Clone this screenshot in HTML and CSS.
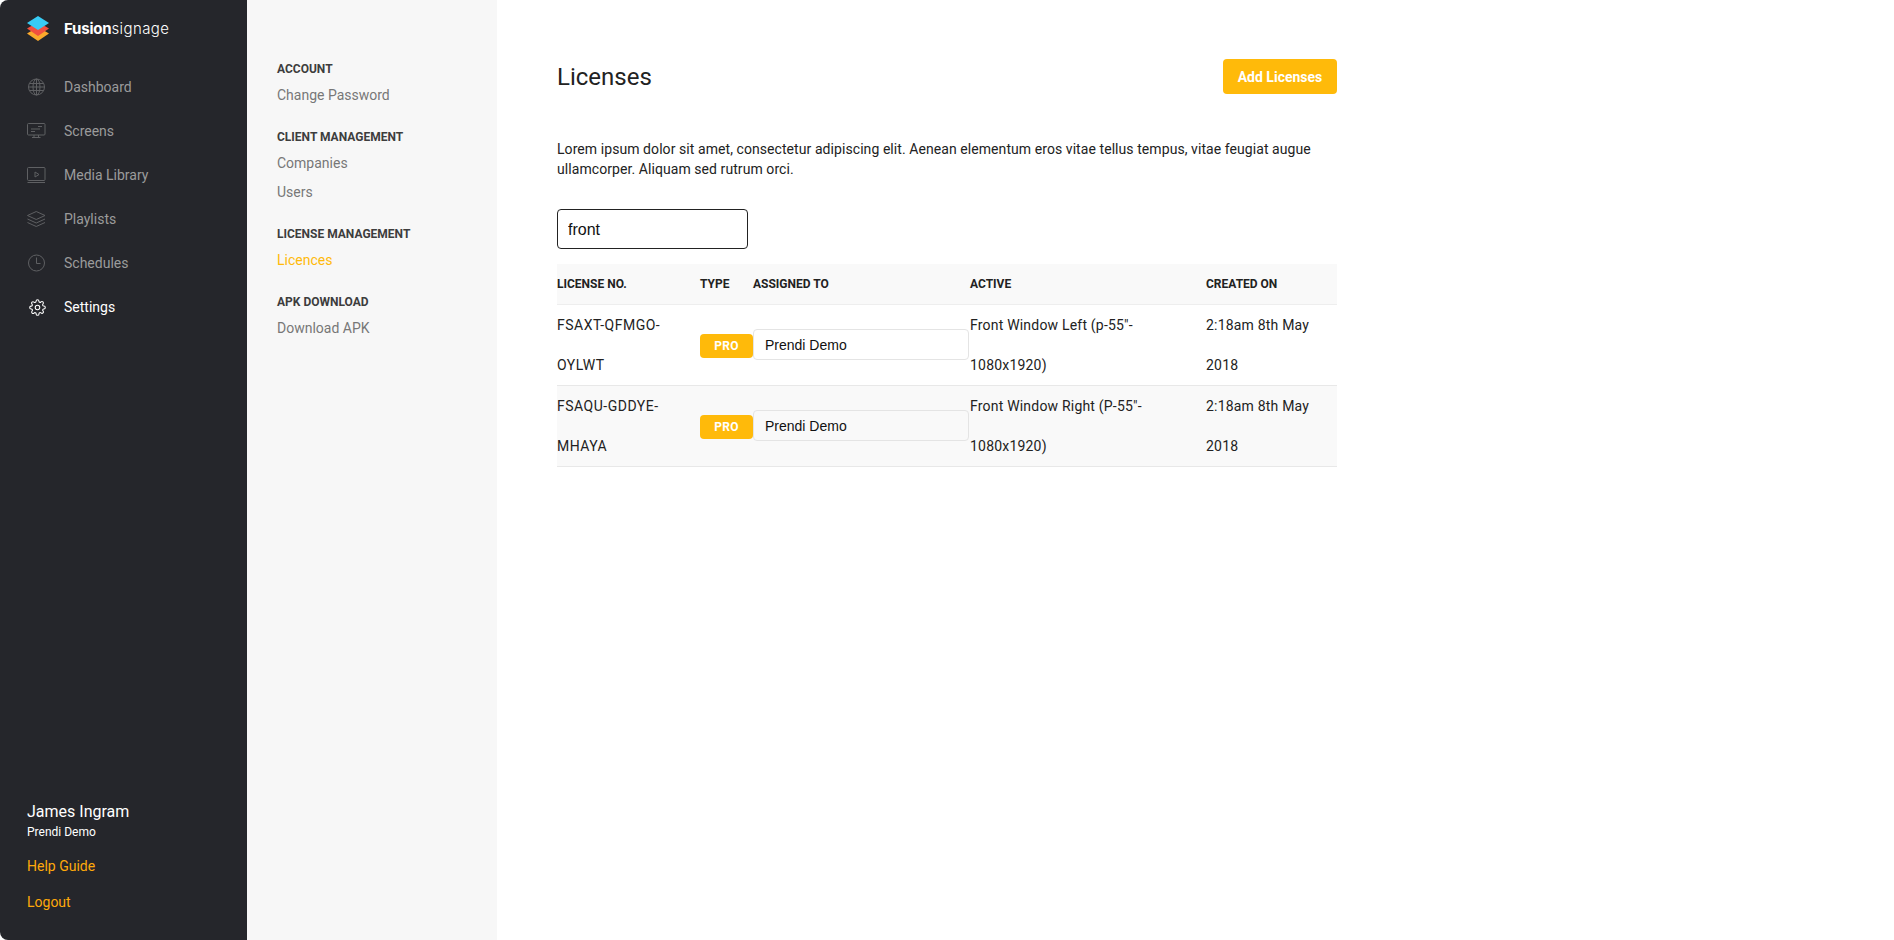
FILE: index.html
```html
<!DOCTYPE html>
<html lang="en">
<head>
    <meta charset="UTF-8">
    <title>Licenses</title>
    <link rel="stylesheet" href="styles.css">
</head>
<body>
    <div class="app">
        <aside class="sidebar">
            <div>
                <div class="logo">
                    <svg width="22" height="25" viewBox="1 0 22 25">
                        <path d="M12 11 L23 17.500 L12 25 L1 17.500 Z" fill="#fba92c"/>
                        <path d="M12 6 L23 12.500 L12 20 L1 12.500 Z" fill="#f1503f"/>
                        <path d="M12 0 L23 7 L12 14 L1 7 Z" fill="#38ccf5"/>
                    </svg>
                    <span class="logo-text"><b>Fusion</b>signage</span>
                </div>
                <nav class="main-nav">
                    <a href="#">
                        <svg viewBox="0 0 20 20" width="20" height="20"><circle cx="9.500" cy="10" r="8"/><ellipse cx="9.500" cy="10" rx="3.500" ry="8"/><path d="M9.500 2V18M1.500 10H17.500M2.500 6.500H16.500M2.500 13.500H16.500"/></svg>
                        Dashboard
                    </a>
                    <a href="#">
                        <svg viewBox="0 0 20 20" width="20" height="20"><rect x="0.500" y="2.500" width="17.500" height="11.500" rx="1"/><path d="M11 5.500H15M4 8H13M4 10.500H8M7 14V16.500M11.500 14V16.500M5 16.500H13.500"/></svg>
                        Screens
                    </a>
                    <a href="#">
                        <svg viewBox="0 0 20 20" width="20" height="20"><rect x="0.500" y="2.500" width="17.500" height="13" rx="1"/><path d="M0.500 17.500H18M8 7L12 9.500L8 12Z"/></svg>
                        Media Library
                    </a>
                    <a href="#">
                        <svg viewBox="0 0 20 20" width="20" height="20"><path d="M9.250 2.500L18 6.500L9.250 10.500L0.500 6.500Z"/><path d="M0.500 10L9.250 14L18 10M0.500 13.500L9.250 17.500L18 13.500"/></svg>
                        Playlists
                    </a>
                    <a href="#">
                        <svg viewBox="0 0 20 20" width="20" height="20"><circle cx="9.500" cy="10" r="8"/><path d="M9.500 4.500V10.500H13.500"/></svg>
                        Schedules
                    </a>
                    <a href="#" class="active">
                        <svg class="gear" viewBox="0 0 24 24" width="17" height="17"><circle cx="12" cy="12" r="3.200"/><path d="M19.400 15a1.650 1.650 0 0 0 .33 1.820l.06.06a2 2 0 1 1-2.830 2.830l-.06-.06a1.650 1.650 0 0 0-1.820-.33 1.650 1.650 0 0 0-1 1.510V21a2 2 0 1 1-4 0v-.09a1.650 1.650 0 0 0-1-1.510 1.650 1.650 0 0 0-1.820.33l-.06.06a2 2 0 1 1-2.830-2.830l.06-.06a1.650 1.650 0 0 0 .33-1.820 1.650 1.650 0 0 0-1.510-1H3a2 2 0 1 1 0-4h.09a1.650 1.650 0 0 0 1.510-1 1.650 1.650 0 0 0-.33-1.820l-.06-.06a2 2 0 1 1 2.830-2.830l.06.06a1.650 1.650 0 0 0 1.820.33h.08a1.650 1.650 0 0 0 1-1.510V3a2 2 0 1 1 4 0v.09a1.650 1.650 0 0 0 1 1.510 1.650 1.650 0 0 0 1.820-.33l.06-.06a2 2 0 1 1 2.830 2.830l-.06.06a1.650 1.650 0 0 0-.33 1.820v.08a1.650 1.650 0 0 0 1.510 1H21a2 2 0 1 1 0 4h-.09a1.650 1.650 0 0 0-1.510 1z"/></svg>
                        Settings
                    </a>
                </nav>
            </div>
            <div class="user">
                <div class="user-name">James Ingram</div>
                <div class="user-company">Prendi Demo</div>
                <a href="#" class="user-link">Help Guide</a>
                <a href="#" class="user-link">Logout</a>
            </div>
        </aside>

        <div class="subnav">
            <h4>ACCOUNT</h4>
            <a href="#">Change Password</a>
            <h4>CLIENT MANAGEMENT</h4>
            <a href="#">Companies</a>
            <a href="#">Users</a>
            <h4>LICENSE MANAGEMENT</h4>
            <a href="#" class="current">Licences</a>
            <h4>APK DOWNLOAD</h4>
            <a href="#">Download APK</a>
        </div>

        <main class="content">
            <div class="page-head">
                <h1>Licenses</h1>
                <button class="btn" type="button">Add Licenses</button>
            </div>
            <p class="intro">Lorem ipsum dolor sit amet, consectetur adipiscing elit. Aenean elementum eros vitae tellus tempus, vitae feugiat augue ullamcorper. Aliquam sed rutrum orci.</p>
            <input class="search" type="text" value="front">
            <table class="licenses">
                <colgroup>
                    <col class="col-no">
                    <col class="col-type">
                    <col class="col-assigned">
                    <col class="col-active">
                    <col class="col-created">
                </colgroup>
                <thead>
                    <tr>
                        <th>LICENSE NO.</th>
                        <th>TYPE</th>
                        <th>ASSIGNED TO</th>
                        <th>ACTIVE</th>
                        <th>CREATED ON</th>
                    </tr>
                </thead>
                <tbody>
                    <tr>
                        <td class="license-no">FSAXT-QFMGO-OYLWT</td>
                        <td class="flush"><span class="badge">PRO</span></td>
                        <td class="flush"><input class="assign" type="text" value="Prendi Demo"></td>
                        <td>Front Window Left (p-55"- 1080x1920)</td>
                        <td>2:18am 8th May 2018</td>
                    </tr>
                    <tr class="alt">
                        <td class="license-no">FSAQU-GDDYE-MHAYA</td>
                        <td class="flush"><span class="badge">PRO</span></td>
                        <td class="flush"><input class="assign" type="text" value="Prendi Demo"></td>
                        <td>Front Window Right (P-55"- 1080x1920)</td>
                        <td>2:18am 8th May 2018</td>
                    </tr>
                </tbody>
            </table>
        </main>
    </div>
</body>
</html>
```

FILE: styles.css
```css
* { box-sizing: border-box; }
html, body { margin: 0; height: 100%; }
body { font-family: Roboto, "Liberation Sans", sans-serif; font-size: 14px; color: #222; background: #fff; overflow: hidden; }
a { text-decoration: none; }

.app { display: flex; height: 940px; }

.sidebar { width: 247px; flex: none; background: #25262b; border-radius: 8px 0 0 8px; display: flex; flex-direction: column; justify-content: space-between; padding: 16px 0 28px 27px; }
.logo { display: flex; align-items: center; gap: 15px; height: 25px; margin-bottom: 24px; }
.logo-text { font-family: Inter, sans-serif; font-size: 15px; font-weight: 300; color: #fff; letter-spacing: 0.4px; }
.logo-text b { font-weight: 700; letter-spacing: -0.2px; }

.main-nav a { display: flex; align-items: center; gap: 17px; height: 44px; color: #9b9b9b; }
.main-nav svg { fill: none; stroke: #5f6063; stroke-width: 1; flex: none; }
.main-nav a.active { color: #fff; }
.main-nav a.active svg { stroke: #fff; stroke-width: 1.500; }
.main-nav .gear { margin: 0 1.500px; }

.user-name { font-size: 16px; line-height: 20px; color: #fff; }
.user-company { font-size: 12px; line-height: 18px; margin-top: 1px; color: #fff; }
.user-link { display: block; color: #ffa90a; line-height: 20px; margin-top: 16px; }
.user-company + .user-link { margin-top: 15px; }

.subnav { width: 250px; flex: none; background: #f7f7f7; padding: 61px 0 0 30px; }
.subnav h4 { margin: 19px 0 3px; font-size: 12px; line-height: 17px; font-weight: 700; color: #3d3d3d; }
.subnav h4:first-child { margin-top: 0; }
.subnav a { display: block; color: #777; line-height: 29px; }
.subnav a.current { color: #ffba0a; }

.content { width: 840px; flex: none; padding: 59px 0 0 60px; }
.page-head { display: flex; justify-content: space-between; align-items: center; height: 35px; }
.page-head h1 { margin: 0; font-size: 24px; font-weight: 400; color: #222; }
.btn { width: 114px; height: 35px; border: 0; border-radius: 4px; background: #ffba0a; color: #fff; font: 700 14px Roboto, sans-serif; }
.intro { margin: 45px 0 0; line-height: 20px; letter-spacing: 0.07px; }
.search { display: block; width: 191px; height: 40px; margin-top: 30px; padding: 1px 10px 0; border: 1px solid #222; border-radius: 4px; font: 16px "Liberation Sans", sans-serif; color: #111; }

.licenses { width: 780px; margin-top: 15px; border-collapse: collapse; table-layout: fixed; }
.col-no { width: 143px; }
.col-type { width: 53px; }
.col-assigned { width: 217px; }
.col-active { width: 236px; }
.col-created { width: 131px; }
.licenses th { height: 40px; padding: 0; text-align: left; font-size: 12px; font-weight: 700; color: #222; background: #f9f9f9; border-bottom: 1px solid #eee; }
.licenses td { height: 81px; padding: 0 10px 0 0; line-height: 40px; vertical-align: middle; color: #222; letter-spacing: 0.2px; border-bottom: 1px solid #e8e8e8; }
.licenses td.license-no { letter-spacing: 0.5px; }
.licenses td.flush { padding: 0; }
.licenses .alt td { background: #f9f9f9; }
.badge { display: block; width: 53px; height: 24px; margin-top: 2px; border-radius: 4px; background: #ffba0a; color: #fff; font-size: 12px; font-weight: 700; line-height: 24px; text-align: center; }
.assign { display: block; width: 216px; height: 31px; padding: 0 11px; border: 1px solid #e4e4e4; border-radius: 4px; background: transparent; font: 14px "Liberation Sans", sans-serif; color: #111; }
```
